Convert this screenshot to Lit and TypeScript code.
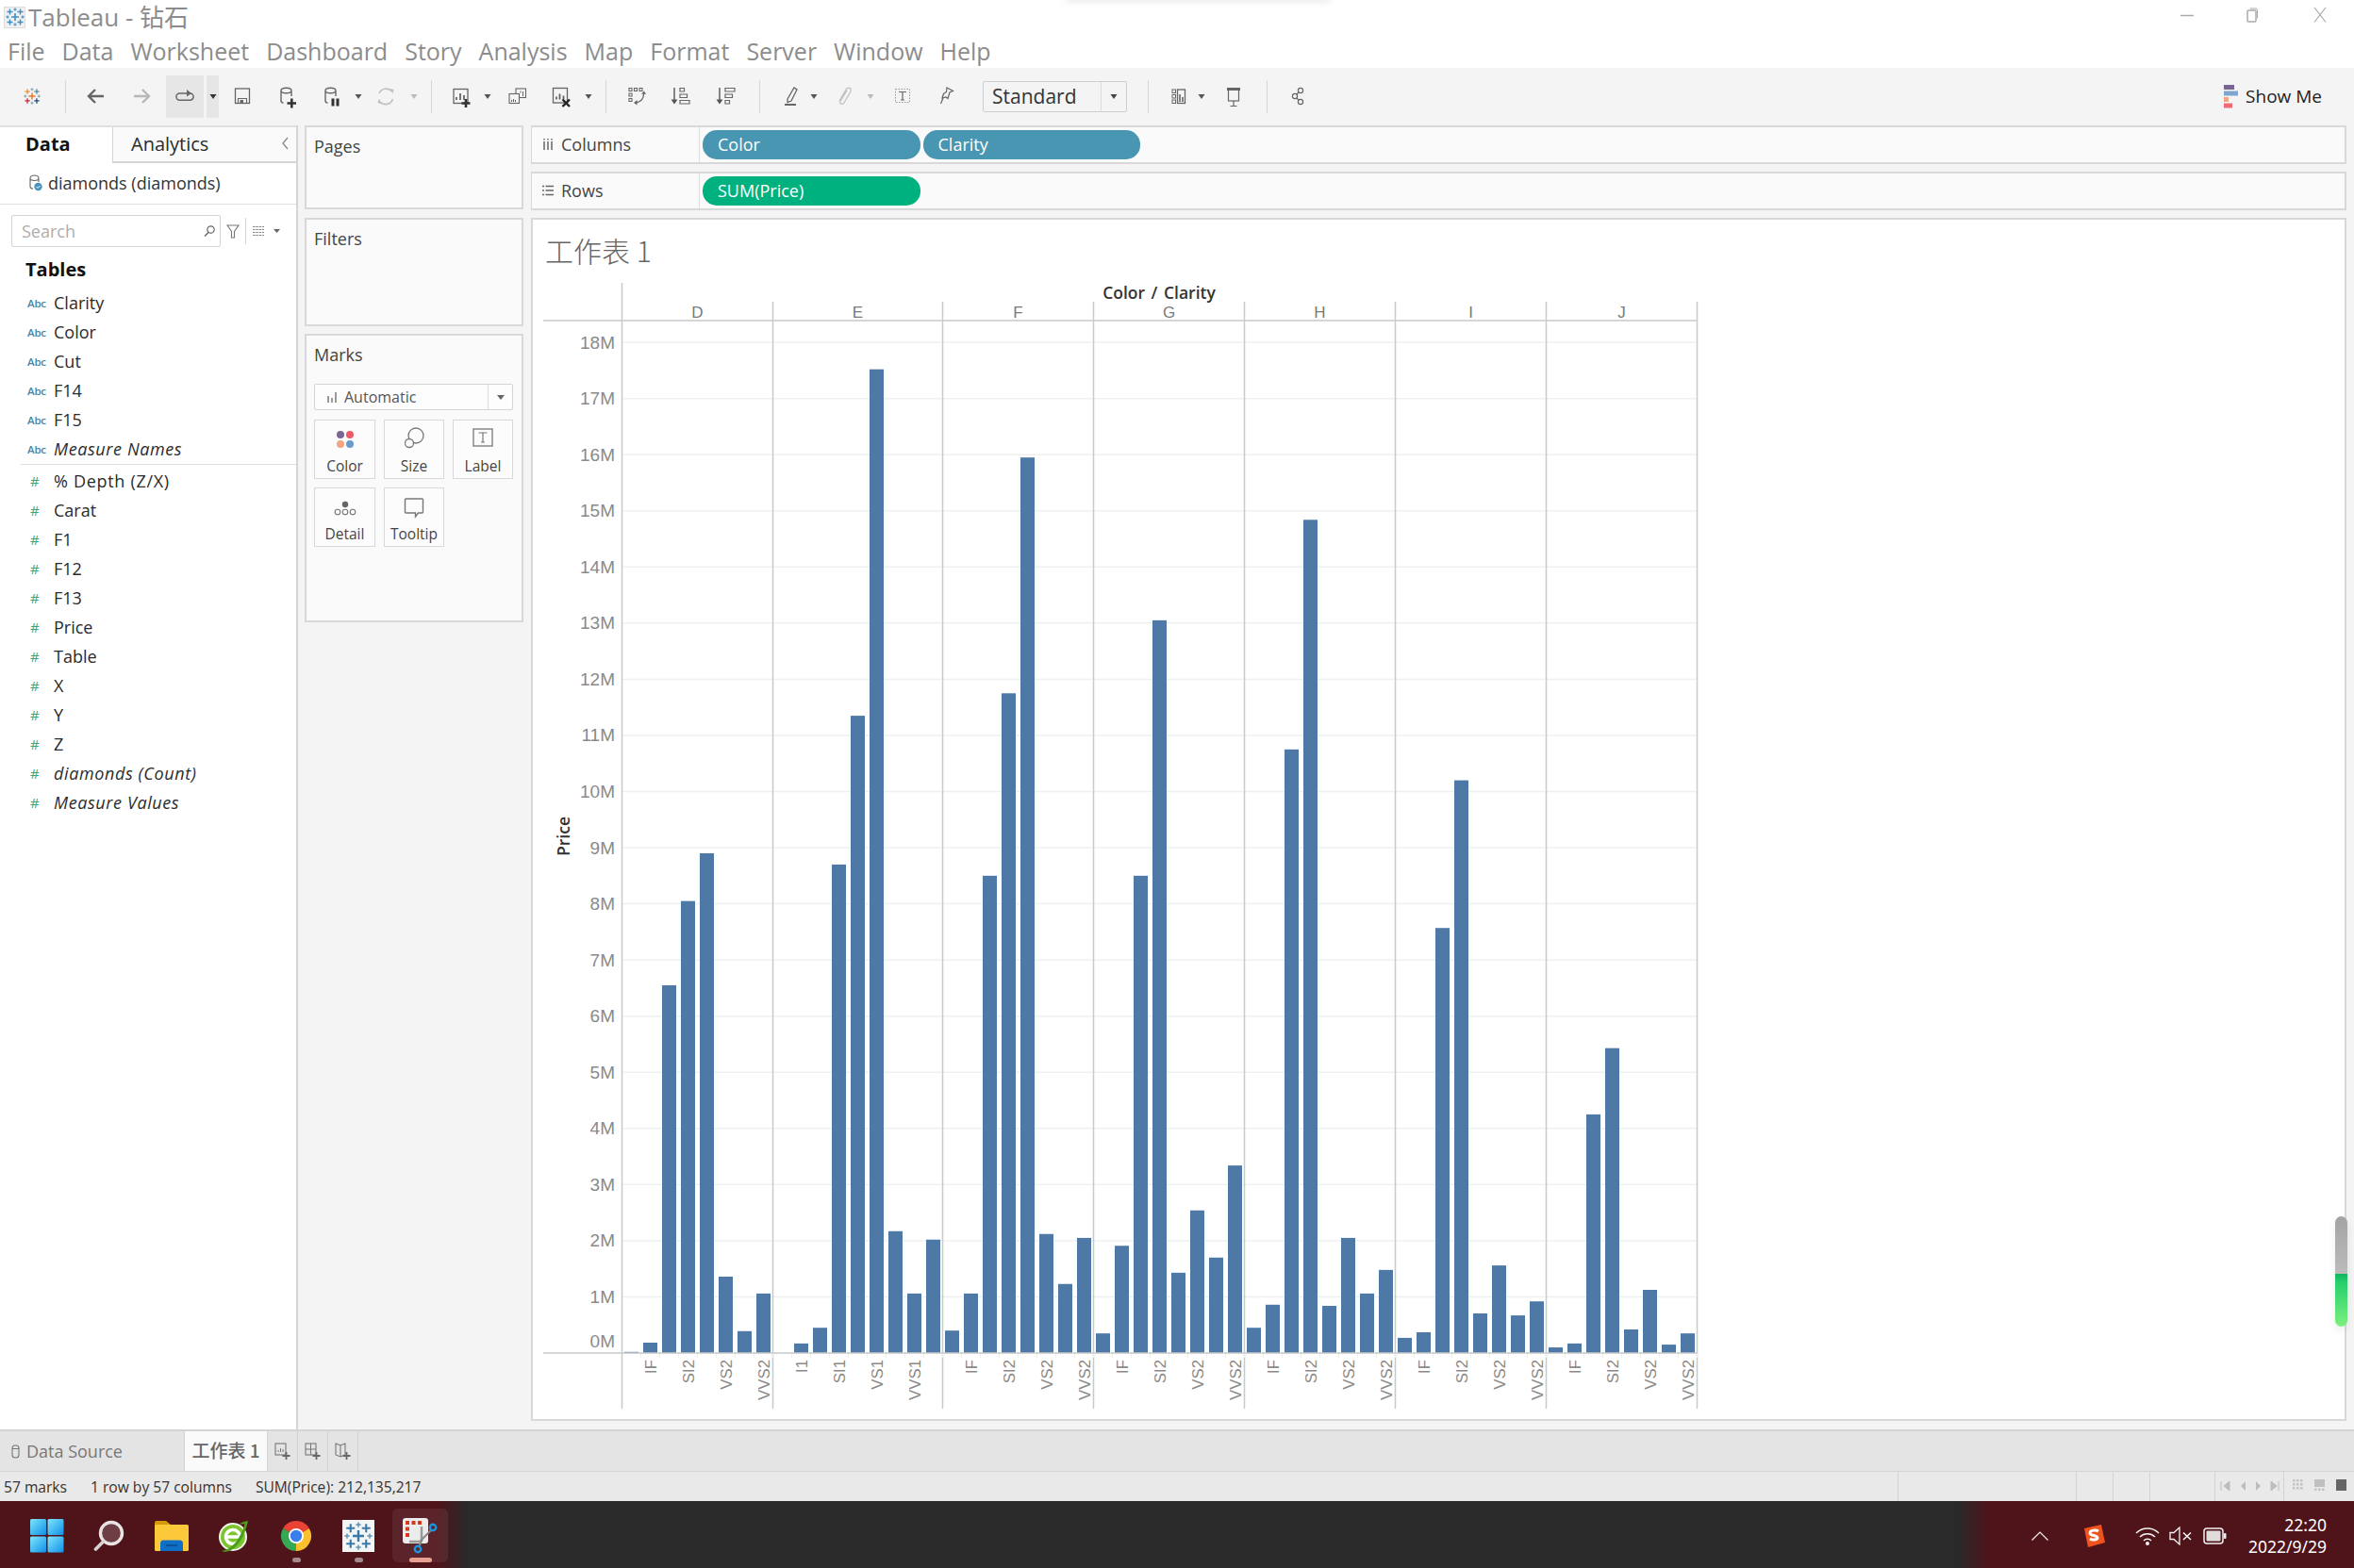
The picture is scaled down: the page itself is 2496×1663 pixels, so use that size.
import { LitElement, html, css, svg } from "lit";
import { customElement } from "lit/decorators.js";

// chart data, one list per Color pane, in millions. null is a column with no mark
const panes = [
  { name: "D", start: 659.5, bars: [0.02, 0.185, 6.55, 8.05, 8.9, 1.36, 0.39, 1.06], labels: ["IF", "SI2", "VS2", "VVS2"] },
  { name: "E", start: 819.5, bars: [null, 0.17, 0.45, 8.7, 11.35, 17.52, 2.17, 1.06, 2.02], labels: ["I1", "SI1", "VS1", "VVS1"] },
  { name: "F", start: 999.5, bars: [0.4, 1.06, 8.5, 11.75, 15.95, 2.12, 1.23, 2.05], labels: ["IF", "SI2", "VS2", "VVS2"] },
  { name: "G", start: 1159.5, bars: [0.35, 1.91, 8.5, 13.05, 1.43, 2.54, 1.7, 3.34], labels: ["IF", "SI2", "VS2", "VVS2"] },
  { name: "H", start: 1319.5, bars: [0.45, 0.86, 10.75, 14.84, 0.84, 2.05, 1.06, 1.48], labels: ["IF", "SI2", "VS2", "VVS2"] },
  { name: "I", start: 1479.5, bars: [0.27, 0.37, 7.57, 10.2, 0.705, 1.56, 0.67, 0.92], labels: ["IF", "SI2", "VS2", "VVS2"] },
  { name: "J", start: 1639.5, bars: [0.1, 0.17, 4.25, 5.43, 0.42, 1.125, 0.15, 0.35], labels: ["IF", "SI2", "VS2", "VVS2"] },
];
const BASE = 1435;
const PER_M = 59.55;
const RIGHT = 1799.5;

const dims = ["Clarity", "Color", "Cut", "F14", "F15"];
const measures = ["% Depth (Z/X)", "Carat", "F1", "F12", "F13", "Price", "Table", "X", "Y", "Z"];
const menus = ["File", "Data", "Worksheet", "Dashboard", "Story", "Analysis", "Map", "Format", "Server", "Window", "Help"];

const box = (w: number, h: number, body: unknown) =>
  html`<svg width=${w} height=${h} viewBox="0 0 ${w} ${h}">${body}</svg>`;

const tableauLogo = (size: number, c: string[]) => {
  const cross = (x: number, y: number, a: number, col: string, w: number) =>
    svg`<path d="M${x - a} ${y}H${x + a}M${x} ${y - a}V${y + a}" stroke=${col} stroke-width=${w} fill="none"/>`;
  return html`<svg width=${size} height=${size} viewBox="0 0 40 40">
    ${cross(20, 20, 8, c[0], 3.2)}
    ${cross(9, 9, 6, c[1], 2.8)}${cross(31, 9, 6, c[2], 2.8)}
    ${cross(9, 31, 6, c[3], 2.8)}${cross(31, 31, 6, c[4], 2.8)}
    ${cross(20, 4, 3.5, c[5], 2)}${cross(20, 36, 3.5, c[5], 2)}
    ${cross(4, 20, 3.5, c[5], 2)}${cross(36, 20, 3.5, c[5], 2)}
  </svg>`;
};

const caret = (col = "#555") => box(10, 30, svg`<path d="M1.5 13h7L5 18z" fill=${col}/>`);
const cyl = svg`<path d="M8 9c0-1.8 2.6-2.8 5.5-2.8S19 7.2 19 9v6M8 9c0 1.7 2.6 2.7 5.5 2.7S19 10.700 19 9M8 9v11c0 1.3 1 2 2.5 2.2" fill="none" stroke="#666" stroke-width="1.4"/>`;
const t = (body: unknown) => box(30, 30, body);

type Tool = { x: number; w: number; icon: unknown; hover?: boolean };

// toolbar items: centre x on the page, width, drawing
const tools: Tool[] = [
  { x: 34, w: 30, icon: tableauLogo(18, ["#e8762c", "#f28e2b", "#5b879b", "#c72037", "#1f447e", "#7099a6"]) },
  { x: 69.5, w: 2, icon: html`<i class="sep"></i>` },
  { x: 102, w: 30, icon: t(svg`<path d="M7 15H23M14 8l-7 7 7 7" fill="none" stroke="#666" stroke-width="2.4"/>`) },
  { x: 150, w: 30, icon: t(svg`<path d="M7 15H23M16 8l7 7-7 7" fill="none" stroke="#b8b8b8" stroke-width="2.4"/>`) },
  { x: 196, w: 40, hover: true, icon: t(svg`<path d="M17 12H9.5a3.6 3.6 0 0 0 0 7.2h11a3.6 3.6 0 0 0 0-7.2H20" fill="none" stroke="#666" stroke-width="1.5"/><path d="M17 8l5 4-5 3.5z" fill="#666"/>`) },
  { x: 225.5, w: 13, hover: true, icon: caret("#333") },
  { x: 257, w: 30, icon: t(svg`<rect x="7.5" y="7" width="15" height="15.5" fill="none" stroke="#666" stroke-width="1.3"/><path d="M10.5 22.5V17.5h9v5" fill="none" stroke="#666" stroke-width="1.1"/><rect x="12.5" y="19" width="3.5" height="3.5" fill="#666"/>`) },
  { x: 305, w: 30, icon: t(svg`${cyl}<path d="M14.5 22.5H24M19.3 17.5v10" stroke="#333" stroke-width="2.6" fill="none"/>`) },
  { x: 352, w: 30, icon: t(svg`${cyl}<rect x="14.5" y="17.5" width="3" height="8" fill="#333"/><rect x="19.5" y="17.5" width="3" height="8" fill="#333"/>`) },
  { x: 380, w: 10, icon: caret() },
  { x: 409, w: 30, icon: t(svg`<path d="M8 12a8 8 0 0 1 13-2.5M22.5 18a8 8 0 0 1-13.5 3" fill="none" stroke="#c0c0c0" stroke-width="1.6"/><path d="M19 7l4.5 1-1 4.500zM11 23.5 6.5 22l1.5-4.5z" fill="#c0c0c0"/>`) },
  { x: 439, w: 10, icon: caret("#bbb") },
  { x: 457.5, w: 2, icon: html`<i class="sep"></i>` },
  { x: 489, w: 30, icon: t(svg`<rect x="7" y="7.5" width="15" height="15" fill="none" stroke="#666" stroke-width="1.3"/><path d="M10 19v-3M14 19v-7M18 19v-5" stroke="#666" stroke-width="1.8"/><path d="M15.5 22.5h9M20 18v9" stroke="#333" stroke-width="2.6"/>`) },
  { x: 517, w: 10, icon: caret() },
  { x: 548, w: 30, icon: t(svg`<rect x="14" y="7" width="10.5" height="9.5" fill="#f4f4f4" stroke="#666" stroke-width="1.1"/><rect x="7" y="12.5" width="10.5" height="10" fill="#f4f4f4" stroke="#666" stroke-width="1.1"/><path d="M9.5 21v-2M11.5 21v-3M13.5 21v-2M19 11.5v-2M21.5 15v-5" stroke="#666" stroke-width="1"/>`) },
  { x: 595, w: 30, icon: t(svg`<rect x="6.5" y="6.5" width="15" height="15.5" fill="none" stroke="#666" stroke-width="1.3"/><path d="M10 18.5v-3M13.5 18.5v-6M17.5 18.5v-4" stroke="#666" stroke-width="1.8"/><path d="M16.5 18.5l7.5 7.5M24 18.5l-7.5 7.5" stroke="#222" stroke-width="2.4"/>`) },
  { x: 624, w: 10, icon: caret() },
  { x: 642.5, w: 2, icon: html`<i class="sep"></i>` },
  { x: 675, w: 30, icon: t(svg`<path d="M7 6.5h3v3H7zM12.5 6.5h3v3h-3zM18 6.5h3v3h-3zM7 12h3v3H7zM7 17.5h3v3H7z" fill="none" stroke="#666" stroke-width="1.1"/><path d="M22.5 12.5c0 5-3 8.500-8 9.5" fill="none" stroke="#666" stroke-width="1.3"/><path d="M20 12.5l3-3 2 3.5zM15.5 19v5.5l-3.5-2.5z" fill="#666"/>`) },
  { x: 722, w: 30, icon: t(svg`<path d="M8 6v14" stroke="#555" stroke-width="1.4"/><path d="M4.5 18.5h7L8 23.5z" fill="#555"/><path d="M14 6.5h4.5v3.5H14zM14 13h7.5v3.5H14zM14 19.5h10v3.5H14z" fill="none" stroke="#666" stroke-width="1.2"/>`) },
  { x: 770, w: 30, icon: t(svg`<path d="M8 6v14" stroke="#555" stroke-width="1.4"/><path d="M4.5 18.5h7L8 23.5z" fill="#555"/><path d="M14 6.5h10v3.5H14zM14 13h7.5v3.5H14zM14 19.5h4.5v3.5H14z" fill="none" stroke="#666" stroke-width="1.2"/>`) },
  { x: 805, w: 2, icon: html`<i class="sep"></i>` },
  { x: 838, w: 30, icon: t(svg`<path d="M12 18l7-12 3 2-6 12-4 1.5z" fill="none" stroke="#666" stroke-width="1.3"/><rect x="9" y="23" width="12" height="2" fill="#666"/>`) },
  { x: 863, w: 10, icon: caret() },
  { x: 895, w: 30, icon: t(svg`<path d="M18 9l-7 11c-1.5 3 2.5 4.5 4 2l7-12c1.5-4-3-5-5-2l-7 12" fill="none" stroke="#c4c4c4" stroke-width="1.4"/>`) },
  { x: 923, w: 10, icon: caret("#bbb") },
  { x: 957, w: 30, icon: t(svg`<rect x="7.5" y="7.5" width="15" height="14" fill="none" stroke="#999" stroke-dasharray="1.5 1.5"/><path d="M11 10.5h8M15 10.5v8.500M13 19h4" fill="none" stroke="#666" stroke-width="1.2"/>`) },
  { x: 1003, w: 30, icon: t(svg`<path d="M16 6l6.5 3.5-3.5 1.5-2 6.500-2-1.5-4 1 1.5-4.5 3-2z" fill="none" stroke="#666" stroke-width="1.2"/><path d="M12 17l-2.5 6" stroke="#666" stroke-width="1.2"/>`) },
];

const tools2: Tool[] = [
  { x: 1217, w: 2, icon: html`<i class="sep"></i>` },
  { x: 1250, w: 30, icon: t(svg`<rect x="8" y="8" width="3.5" height="3.5" fill="none" stroke="#666"/><rect x="8" y="13.5" width="3.5" height="3.5" fill="none" stroke="#666"/><rect x="8" y="19" width="3.5" height="3.5" fill="none" stroke="#666"/><rect x="13.5" y="8" width="8" height="14.5" fill="none" stroke="#666" stroke-width="1.3"/><path d="M16 21v-8M19 21v-5" stroke="#666" stroke-width="1.6"/>`) },
  { x: 1274, w: 10, icon: caret() },
  { x: 1308, w: 30, icon: t(svg`<path d="M8 7.5h14" stroke="#666" stroke-width="3"/><rect x="9.5" y="8" width="11" height="12" fill="none" stroke="#666" stroke-width="1.2"/><path d="M15 20v5M11.5 25.500h7" stroke="#666" stroke-width="1.2"/>`) },
  { x: 1343, w: 2, icon: html`<i class="sep"></i>` },
  { x: 1376, w: 30, icon: t(svg`<circle cx="18" cy="9" r="2.6" fill="none" stroke="#666" stroke-width="1.2"/><circle cx="12" cy="15" r="2.6" fill="none" stroke="#666" stroke-width="1.2"/><circle cx="18" cy="21" r="2.6" fill="none" stroke="#666" stroke-width="1.2"/><path d="M16 11l-2.5 2.2M13.8 17l2.3 2.200" stroke="#666" stroke-width="1.2"/>`) },
];

@customElement("app-root")
export class AppRoot extends LitElement {
  static styles = css`
    :host {
      display: flex;
      flex-direction: column;
      position: relative;
      width: 2496px;
      height: 1663px;
      overflow: hidden;
      background: #fff;
      color: #2b2b2b;
      font-family: "Open Sans", "Noto Sans CJK SC", sans-serif;
      font-size: 18px;
    }
    svg { display: block; flex: none; }

    /* window chrome */
    .titlebar { height: 36px; flex: none; display: flex; align-items: center; color: #8c8c8c; font-size: 26px; padding-left: 4px; box-sizing: border-box; }
    .win-logo { margin-right: 3px; width: 23px; height: 23px; display: flex; align-items: center; justify-content: center; background: #f1f1f1; border: 1px solid #ddd; box-sizing: border-box; }
    .win-title { line-height: 32px; }
    .win-btns { margin-left: auto; display: flex; align-items: center; margin-right: 29px; gap: 56px; margin-bottom: 4px; }
    .win-btns svg:last-child { margin-left: 3px; }
    .menubar { height: 36px; flex: none; display: flex; align-items: center; gap: 18px; padding-left: 8px; font-size: 25px; color: #8c8c8c; }
    .menubar span { white-space: nowrap; }

    .toolbar { height: 61px; flex: none; display: flex; align-items: center; background: #f4f4f4; box-sizing: border-box; padding-bottom: 1px; }
    .tool { height: 45px; flex: none; display: flex; align-items: center; justify-content: center; }
    .tool.hover { background: #e6e6e6; }
    .sep { display: block; width: 1px; height: 35px; background: #d6d6d6; }
    .combo { flex: none; display: flex; align-items: center; width: 153px; height: 33px; box-sizing: border-box; border: 1px solid #cfcfcf; border-radius: 2px; font-size: 21px; color: #333; padding-left: 9px; }
    .combo b { font-weight: 400; flex: 1; }
    .combo i { width: 26px; align-self: stretch; border-left: 1px solid #dcdcdc; display: flex; align-items: center; justify-content: center; }
    .showme { margin-left: auto; margin-right: 34px; display: flex; align-items: center; gap: 6px; font-size: 19px; color: #222; }

    /* body */
    .main { flex: 1; display: flex; background: #f4f4f4; min-height: 0; }
    .data { width: 316px; flex: none; box-sizing: border-box; background: #fff; border-right: 2px solid #d4d4d4; }
    .tabs { height: 40px; display: flex; box-sizing: border-box; border-top: 2px solid #e0e0e0; }
    .tab-on { width: 119px; font-size: 20px; font-weight: 700; color: #111; padding-left: 27px; box-sizing: border-box; line-height: 35px; }
    .tab-off { flex: 1; display: flex; align-items: center; justify-content: space-between; background: #fafafa; border-left: 1.5px solid #d4d4d4; border-bottom: 2px solid #d4d4d4; padding: 0 6px 2px 19px; font-size: 20px; }
    .source { height: 44px; display: flex; align-items: center; gap: 6px; padding-left: 31px; padding-bottom: 1px; border-bottom: 1.5px solid #e0e0e0; box-sizing: border-box; color: #333; }
    .search-row { display: flex; align-items: center; height: 34px; margin: 11px 0 0 12px; }
    .search { width: 222px; height: 34px; box-sizing: border-box; border: 1.5px solid #d4d4d4; border-radius: 2px; display: flex; align-items: center; justify-content: space-between; padding: 0 4px 1px 10px; color: #adadad; }
    .funnel { margin-left: 6px; }
    .filter-sep { width: 1px; height: 28px; background: #d6d6d6; margin: 0 6px; }
    .tables { font-size: 20px; font-weight: 700; color: #111; padding-left: 27px; height: 43.5px; line-height: 48px; }
    .field { height: 31px; display: flex; align-items: center; padding-left: 29px; white-space: nowrap; }
    .field .ty { width: 28px; flex: none; }
    .abc { font-size: 11.5px; font-weight: 600; color: #4a86a3; letter-spacing: -0.2px; }
    .num { font-size: 15px; color: #3fa27c; padding-left: 3px; box-sizing: border-box; }
    .field.it .name { font-style: italic; letter-spacing: 0.6px; }
    .field.wide .name { letter-spacing: 0.7px; }
    .rule { height: 1.5px; background: #e0e0e0; margin: 0 0 1px 22px; }

    .cards { width: 232px; flex: none; margin-left: 7px; }
    .card { box-sizing: border-box; background: #fafafa; border: 2px solid #d8d8d8; padding: 8px 0 0 8px; color: #444; }
    .card.pages { height: 89px; margin-bottom: 9px; }
    .card.filters { height: 115px; margin-bottom: 8px; }
    .card.marks { height: 306px; }
    .mark-type { width: 211px; height: 28px; margin: 19px 0 10px 0; box-sizing: border-box; border: 1.5px solid #d4d4d4; border-radius: 2px; display: flex; align-items: center; font-size: 16px; background: #fdfdfd; color: #555; padding-left: 13px; gap: 7px; }
    .mark-type span { flex: 1; }
    .mark-type i { width: 25px; align-self: stretch; border-left: 1px solid #dcdcdc; display: flex; justify-content: center; align-items: center; }
    .mark-btns { display: grid; grid-template-columns: 65px 64px 64px; column-gap: 9px; row-gap: 9px; }
    .mark-btn { height: 63px; box-sizing: border-box; border: 1.5px solid #d8d8d8; display: flex; flex-direction: column; align-items: center; font-size: 15.5px; color: #444; background: #fcfcfc; }
    .mark-btn .ico { height: 37px; flex: none; }

    .work { flex: 1; display: flex; flex-direction: column; margin: 0 8px 9px 8px; min-width: 0; }
    .shelf { height: 41px; flex: none; box-sizing: border-box; background: #fafafa; border: 2px solid #d8d8d8; border-left-width: 1.5px; display: flex; align-items: center; margin-bottom: 8px; }
    .shelf-label { width: 178px; align-self: stretch; box-sizing: border-box; flex: none; display: flex; align-items: center; gap: 7px; padding: 0 0 2px 11px; border-right: 1px solid #dedede; color: #444; }
    .pill { width: 230.5px; height: 31px; border-radius: 15px; color: #fff; margin-left: 3px; padding-left: 16px; box-sizing: border-box; line-height: 30px; font-weight: 500; }
    .pill.dim { background: #4996b2; }
    .pill.mea { background: #00b180; }

    .sheet { flex: 1; background: #fff; border: 2px solid #d8d8d8; box-sizing: border-box; min-height: 0; }
    .sheet-title { height: 65px; box-sizing: border-box; padding: 10px 0 0 13px; font-size: 30px; font-family: "Noto Sans CJK SC", sans-serif; font-weight: 300; color: #666; line-height: 44px; }
    .chart text { font-family: "Liberation Sans", sans-serif; fill: #8a8a8a; }
    .chart .hdr { font-size: 17px; fill: #7a7a7a; }
    .chart .ttl { font-family: "Open Sans", sans-serif; font-size: 17.5px; font-weight: 600; fill: #333; word-spacing: 2px; }

    /* bottom strips */
    .sheet-tabs { height: 45px; flex: none; display: flex; background: #e4e4e4; border-top: 2px solid #d4d4d4; box-sizing: border-box; border-bottom: 1.5px solid #d4d4d4; }
    .ds { width: 195px; flex: none; display: flex; align-items: center; gap: 7px; padding-left: 12px; box-sizing: border-box; font-size: 18px; color: #777; }
    .active-tab { width: 89px; flex: none; background: #fafafa; text-align: center; line-height: 40px; font-size: 19px; font-family: "Noto Sans CJK SC", sans-serif; color: #666; font-weight: 500; border-left: 1px solid #d4d4d4; border-right: 1px solid #d4d4d4; box-sizing: border-box; }
    .new-tab { width: 32px; flex: none; display: flex; align-items: center; justify-content: center; border-right: 1.5px solid #d0d0d0; box-sizing: border-box; }
    .status { height: 31px; flex: none; display: flex; align-items: center; background: #e9e9e9; font-size: 15.6px; color: #333; box-sizing: border-box; }
    .status .msg { white-space: nowrap; margin-left: 25px; }
    .status .msg:first-child { margin-left: 4px; }
    .cell { align-self: stretch; border-left: 1.5px solid #d4d4d4; box-sizing: border-box; flex: none; display: flex; align-items: center; }
    .cell.first { margin-left: auto; }

    .taskbar { height: 71px; flex: none; display: flex; align-items: stretch; background: linear-gradient(to right, #4e141a 465px, #2a2a2a 495px, #2a2a2a 2075px, #4e141a 2110px); color: #fff; }
    .apps { display: grid; grid-template-columns: repeat(7, 66px); padding-left: 16.5px; }
    .app { position: relative; display: flex; align-items: center; justify-content: center; padding-top: 3px; }
    .app.on::before { content: ""; position: absolute; left: 3px; right: 4px; top: 8px; bottom: 6px; background: rgba(255, 255, 255, 0.07); border-radius: 6px; }
    .app svg { position: relative; }
    .tile { background: #f3f4f4; width: 34px; height: 34px; display: flex; align-items: center; justify-content: center; }
    .dot { position: absolute; left: 50%; top: 60px; width: 9px; height: 5px; margin-left: -4px; border-radius: 3px; background: #a58a8d; }
    .on .dot { width: 24px; margin-left: -12px; background: #e8a090; }
    .tray { margin-left: auto; display: flex; align-items: center; padding-top: 2px; }
    .tray .g1 { margin-left: 34px; }
    .tray .g2 { margin-left: 31px; }
    .tray .g3 { margin-left: 10px; }
    .tray .g4 { margin-left: 11px; }
    .clock { width: 106px; margin-right: 29px; text-align: right; font-size: 17.5px; line-height: 23px; font-family: "Noto Sans", sans-serif; }

    .scroll { position: absolute; left: 2476px; top: 1290px; width: 13px; height: 117px; border-radius: 7px; background: linear-gradient(to bottom, #a3a3a3 0, #bcbcbc 52%, #12b35e 52%, #27d06c 60%, #7cf07f 100%); box-shadow: 0 4px 10px rgba(0, 0, 0, 0.08); }
    .smudge { position: absolute; left: 1130px; top: -6px; width: 280px; height: 6px; box-shadow: 0 1px 8px rgba(0, 0, 0, 0.12); }
  `;

  private renderTools(items: Tool[], from: number) {
    let right = from;
    return items.map((i) => {
      const left = i.x - i.w / 2;
      const gap = left - right;
      right = left + i.w;
      return html`<div class="tool ${i.hover ? "hover" : ""}" style="width:${i.w}px;margin-left:${gap}px">${i.icon}</div>`;
    });
  }

  private renderChart() {
    const ticks = Array.from({ length: 19 }, (_, n) => n);
    return html`<svg class="chart" width="1300" height="1210" viewBox="565 298 1300 1210">
      ${ticks.filter((n) => n > 0).map((n) => svg`<line x1="659" x2=${RIGHT} y1=${BASE - n * PER_M} y2=${BASE - n * PER_M} stroke="#f0f0f0" stroke-width="1.5"/>`)}
      ${ticks.map((n) => svg`<text x="652" y=${n === 0 ? 1429 : BASE - n * PER_M + 6.5} text-anchor="end" font-size="19">${n}M</text>`)}
      <text class="ttl" x="1229" y="316.5" text-anchor="middle">Color / Clarity</text>
      <text class="ttl" x="0" y="0" text-anchor="middle" transform="translate(603.5 887) rotate(-90)">Price</text>
      <line x1="659.5" x2="659.5" y1="300" y2="1494" stroke="#c9c9c9" stroke-width="1.5"/>
      ${panes.map((p, i) => {
        const next = i + 1 < panes.length ? panes[i + 1].start : RIGHT;
        return svg`
          <line x1=${next} x2=${next} y1="320" y2="1494" stroke="#c9c9c9" stroke-width="1.5"/>
          <text class="hdr" x=${(p.start + next) / 2} y="337" text-anchor="middle">${p.name}</text>
          ${p.bars.map((v, c) => {
            const x = p.start + c * 20;
            return svg`
              <line x1=${x + 20} x2=${x + 20} y1=${BASE} y2=${BASE + 5} stroke="#eeeeee"/>
              ${v === null ? "" : svg`<rect x=${x + 2.5} y=${BASE - v * PER_M} width="15" height=${v * PER_M} fill="#4e79a7"/>`}`;
          })}
          ${p.labels.map((l, k) => {
            const cx = p.start + 20 * (2 * k + 1) + 10.5;
            return svg`<text x=${cx} y="1442" dy=".35em" font-size="16.8" text-anchor="end" transform="rotate(-90 ${cx} 1442)">${l}</text>`;
          })}`;
      })}
      <line x1="576" x2=${RIGHT} y1="340" y2="340" stroke="#c9c9c9" stroke-width="1.5"/>
      <line x1="576" x2=${RIGHT} y1=${BASE} y2=${BASE} stroke="#c9c9c9" stroke-width="1.5"/>
    </svg>`;
  }

  private renderApps() {
    const grad = svg`<defs>
      <linearGradient id="w" x1="0" y1="0" x2="1" y2="1"><stop offset="0" stop-color="#7fe6fb"/><stop offset="1" stop-color="#0f8fe8"/></linearGradient>
    </defs>`;
    return html`<div class="apps">
      <div class="app">${box(36, 36, svg`${grad}<rect x="0" y="0" width="17" height="17" rx="1.5" fill="url(#w)"/><rect x="18.5" y="0" width="17" height="17" rx="1.5" fill="url(#w)"/><rect x="0" y="18.5" width="17" height="17" rx="1.5" fill="url(#w)"/><rect x="18.5" y="18.5" width="17" height="17" rx="1.5" fill="url(#w)"/>`)}</div>
      <div class="app">${box(34, 34, svg`<circle cx="19" cy="14" r="11.5" fill="#6f3d44" stroke="#e8e4e4" stroke-width="3.4"/><path d="M10.5 23 2.500 31" stroke="#d9d4d4" stroke-width="3.6" stroke-linecap="round"/>`)}</div>
      <div class="app">${box(36, 34, svg`<path d="M0 3a2 2 0 0 1 2-2h10l5 4v8H0z" fill="#d69a08"/><rect x="0" y="5" width="36" height="28" rx="1.5" fill="#fcc93a"/><path d="M6 33V25a3.5 3.5 0 0 1 3.5-3.5h17A3.5 3.5 0 0 1 30 25v8z" fill="#0f6fc6"/><path d="M12 27h12" stroke="#0a4a8a" stroke-width="1.500"/>`)}</div>
      <div class="app">${box(34, 36, svg`<circle cx="16" cy="19" r="15" fill="#f2f7ee"/><circle cx="16" cy="19" r="13" fill="#7cc52e"/><path d="M8.5 19h15M23.500 19a7.500 7.500 0 1 0-2.500 5.500" fill="none" stroke="#fff" stroke-width="3.500"/><path d="M4 34C12 37 26 30 32 2c-4 .5-8 2-11 4.500 4-1.500 6-1.500 7.500-1C23 24 13 33 4 34z" fill="#4a9e1c"/>`)}</div>
      <div class="app">${box(34, 34, svg`<path d="M17 17 3.14 9A16 16 0 0 1 30.86 9Z" fill="#ea4335"/><path d="M17 17 30.86 9A16 16 0 0 1 17 33Z" fill="#fbc02d"/><path d="M17 17 17 33A16 16 0 0 1 3.14 9Z" fill="#34a853"/><circle cx="17" cy="17" r="8" fill="#fff"/><circle cx="17" cy="17" r="6.2" fill="#3c7ded"/>`)}<i class="dot"></i></div>
      <div class="app"><div class="tile">${tableauLogo(30, ["#3a7aa8", "#3a7aa8", "#3a7aa8", "#3a7aa8", "#3a7aa8", "#5c93b8"])}</div><i class="dot"></i></div>
      <div class="app on">${box(37, 38, svg`<rect x="0" y="0" width="27" height="27" rx="3" fill="#ececec"/><path d="M3 3h4v4H3zM9.5 3h4v4h-4zM16 3h4v4h-4zM3 9.5h4v4H3zM3 16h4v4H3z" fill="#d8381c"/><path d="M20 9v13a3 3 0 0 1-3 3H7" fill="none" stroke="#9a9a9a" stroke-width="2.5"/><path d="M21 22 31 12M21 22 17 31" stroke="#888" stroke-width="2"/><circle cx="32" cy="10" r="3.2" fill="none" stroke="#1a96e0" stroke-width="2.4"/><circle cx="16" cy="33" r="3.2" fill="none" stroke="#1a96e0" stroke-width="2.4"/>`)}<i class="dot"></i></div>
    </div>`;
  }

  private renderStatus() {
    const navCol = "#bdbdbd";
    const dots = (x: number, y: number, n: number, s: number, f: string) =>
      Array.from({ length: n * n }, (_, i) =>
        svg`<rect x=${x + (i % n) * (s + 1.5)} y=${y + Math.floor(i / n) * (s + 1.5)} width=${s} height=${s} fill=${f}/>`);
    return html`<div class="status">
      <span class="msg">57 marks</span>
      <span class="msg">1 row by 57 columns</span>
      <span class="msg">SUM(Price): 212,135,217</span>
      <div class="cell first" style="width:189px"></div>
      <div class="cell" style="width:39px"></div>
      <div class="cell" style="width:39px"></div>
      <div class="cell" style="width:69px"></div>
      <div class="cell" style="width:73px">${box(73, 31, svg`
        <path d="M6 10v10M15 10l-6 5 6 5z" fill=${navCol} stroke=${navCol}/>
        <path d="M32 10l-5 5 5 5zM43 10l5 5-5 5z" fill=${navCol}/>
        <path d="M59 10l6 5-6 5zM67 10v10" fill=${navCol} stroke=${navCol}/>`)}</div>
      <div class="cell" style="width:75px">${box(75, 31, svg`
        ${dots(9, 8, 3, 2.5, "#c4c4c4")}
        <rect x="32" y="8" width="11" height="8" fill="#c0c0c0"/>${dots(32, 17.5, 3, 2.5, "#c4c4c4").slice(0, 3)}
        <rect x="55" y="8" width="11" height="12" fill="#666"/>`)}</div>
    </div>`;
  }

  render() {
    return html`
      <div class="titlebar">
        <div class="win-logo">${tableauLogo(20, Array(6).fill("#3d8ec0"))}</div>
        <span class="win-title">Tableau - 钻石</span>
        <div class="win-btns">
          ${box(14, 16, svg`<path d="M0 8.5h14" stroke="#aaa" stroke-width="1.5"/>`)}
          ${box(12, 16, svg`<rect x="1" y="3" width="9" height="12" rx="1" fill="none" stroke="#aaa" stroke-width="1.5"/><path d="M3.5 1h6.5a1.5 1.5 0 0 1 1.5 1.5v9" fill="none" stroke="#aaa"/>`)}
          ${box(14, 16, svg`<path d="M1 0 13 15.5M13 0 1 15.5" stroke="#aaa" stroke-width="1.2"/>`)}
        </div>
      </div>
      <div class="menubar">${menus.map((m) => html`<span>${m}</span>`)}</div>

      <div class="toolbar">
        ${this.renderTools(tools, 0)}
        <div class="combo" style="margin-left:${1042 - 1018}px"><b>Standard</b><i>${caret("#444")}</i></div>
        ${this.renderTools(tools2, 1195)}
        <div class="showme">
          ${box(17, 36, svg`<rect x="0" y="6" width="11" height="5" fill="#7b6593"/><rect x="0" y="12.5" width="15" height="5" fill="#7fa6cf"/><rect x="0" y="19" width="5" height="5" fill="#f4a582"/><rect x="0" y="25.5" width="9" height="5" fill="#ee6a78"/>`)}
          <span>Show Me</span>
        </div>
      </div>

      <div class="main">
        <div class="data">
          <div class="tabs">
            <div class="tab-on">Data</div>
            <div class="tab-off"><span>Analytics</span>${box(10, 14, svg`<path d="M7 1 2 7l5 6" fill="none" stroke="#888" stroke-width="1.3"/>`)}</div>
          </div>
          <div class="source">
            ${box(14, 18, svg`<path d="M1 4c0-2 2-3 4.5-3S10 2 10 4v4M1 4c0 1.5 2 2.5 4.5 2.5S10 5.500 10 4M1 4v9c0 1.5 1.5 2 3 2.2" fill="none" stroke="#666" stroke-width="1.1"/><circle cx="9.5" cy="13" r="4.2" fill="#4a93bd"/><path d="M7.5 13l1.5 1.5 2.5-2.5" fill="none" stroke="#fff"/>`)}
            <span>diamonds (diamonds)</span>
          </div>
          <div class="search-row">
            <div class="search"><span>Search</span>${box(14, 16, svg`<circle cx="8.5" cy="6.5" r="3.7" fill="none" stroke="#666" stroke-width="1.2"/><path d="M6 9.5 2 13.5" stroke="#666" stroke-width="1.4"/>`)}</div>
            <div class="funnel">${box(14, 16, svg`<path d="M1 2h12L8.5 8.5V15h-3V8.5z" fill="none" stroke="#777" stroke-width="1.1"/>`)}</div>
            <i class="filter-sep"></i>
            ${box(30, 16, svg`<path d="M1 3.5h12M1 6.5h12M1 9.5h12M1 12.5h12" stroke="#888" stroke-dasharray="2.5 .8"/><path d="M23 6h7l-3.500 4z" fill="#666"/>`)}
          </div>
          <div class="tables">Tables</div>
          ${dims.map((d) => html`<div class="field"><span class="ty abc">Abc</span><span class="name">${d}</span></div>`)}
          <div class="field it"><span class="ty abc">Abc</span><span class="name">Measure Names</span></div>
          <div class="rule"></div>
          ${measures.map((d) => html`<div class="field ${d.startsWith("%") ? "wide" : ""}"><span class="ty num">#</span><span class="name">${d}</span></div>`)}
          <div class="field it"><span class="ty num">#</span><span class="name">diamonds (Count)</span></div>
          <div class="field it"><span class="ty num">#</span><span class="name">Measure Values</span></div>
        </div>

        <div class="cards">
          <div class="card pages">Pages</div>
          <div class="card filters">Filters</div>
          <div class="card marks">
            Marks
            <div class="mark-type">
              ${box(11, 12, svg`<path d="M1 5v7M5 7v5M9 1v11" stroke="#999" stroke-width="2"/>`)}
              <span>Automatic</span>
              <i>${box(10, 10, svg`<path d="M1 3h8L5 8z" fill="#666"/>`)}</i>
            </div>
            <div class="mark-btns">
              <div class="mark-btn">
                <div class="ico">${box(24, 36, svg`<circle cx="7" cy="15" r="4" fill="#7b6593"/><circle cx="17" cy="15" r="4" fill="#ee5a6b"/><circle cx="7" cy="25" r="4" fill="#f4a582"/><circle cx="17" cy="25" r="4" fill="#6a9bcb"/>`)}</div>Color
              </div>
              <div class="mark-btn">
                <div class="ico">${box(24, 36, svg`<circle cx="14" cy="16" r="8" fill="none" stroke="#777" stroke-width="1.3"/><circle cx="7" cy="24" r="4.5" fill="#fcfcfc" stroke="#777" stroke-width="1.3"/>`)}</div>Size
              </div>
              <div class="mark-btn">
                <div class="ico">${box(24, 36, svg`<rect x="2" y="9" width="20" height="18" fill="none" stroke="#777" stroke-width="1.3"/><path d="M7.500 13h9M12 13v10M10 23h4" fill="none" stroke="#777" stroke-width="1.2"/>`)}</div>Label
              </div>
              <div class="mark-btn">
                <div class="ico">${box(26, 36, svg`<circle cx="13" cy="17" r="3.2" fill="#666"/><circle cx="5" cy="25" r="2.8" fill="none" stroke="#777" stroke-width="1.1"/><circle cx="13" cy="25" r="2.8" fill="none" stroke="#777" stroke-width="1.1"/><circle cx="21" cy="25" r="2.8" fill="none" stroke="#777" stroke-width="1.1"/>`)}</div>Detail
              </div>
              <div class="mark-btn">
                <div class="ico">${box(24, 36, svg`<path d="M3.5 11h17a1 1 0 0 1 1 1v13a1 1 0 0 1-1 1h-4l-3 4v-4h-10a1 1 0 0 1-1-1V12a1 1 0 0 1 1-1z" fill="none" stroke="#777" stroke-width="1.4"/>`)}</div>Tooltip
              </div>
            </div>
          </div>
        </div>

        <div class="work">
          <div class="shelf">
            <div class="shelf-label">${box(13, 14, svg`<path d="M2 1v1.5M6 1v1.5M10 1v1.5M2 4v9M6 4v9M10 4v9" stroke="#666" stroke-width="1.5"/>`)}Columns</div>
            <div class="pill dim">Color</div><div class="pill dim">Clarity</div>
          </div>
          <div class="shelf">
            <div class="shelf-label">${box(13, 14, svg`<path d="M0 2.5h2M3.5 2.5H12M0 7h2M3.5 7H12M0 11.5h2M3.5 11.5H12" stroke="#666" stroke-width="1.5"/>`)}Rows</div>
            <div class="pill mea">SUM(Price)</div>
          </div>
          <div class="sheet">
            <div class="sheet-title">工作表 1</div>
            ${this.renderChart()}
          </div>
        </div>
      </div>

      <div class="sheet-tabs">
        <div class="ds">${box(9, 15, svg`<rect x="1" y="1" width="7" height="13" rx="3" fill="none" stroke="#777" stroke-width="1.1"/><path d="M1 4.5h7" stroke="#777"/>`)}Data Source</div>
        <div class="active-tab">工作表 1</div>
        <div class="new-tab">${box(18, 20, svg`<rect x="1" y="2" width="11" height="12" fill="none" stroke="#777" stroke-width="1.1"/><path d="M4 11V9M6.5 11V7M9 11V8" stroke="#777"/><path d="M8.5 15h8M12.5 11v8" stroke="#666" stroke-width="1.8"/>`)}</div>
        <div class="new-tab">${box(18, 20, svg`<rect x="1" y="2" width="11" height="12" fill="none" stroke="#777" stroke-width="1.1"/><path d="M1 8h11M6.5 2v12" stroke="#777"/><path d="M8.5 15h8M12.5 11v8" stroke="#666" stroke-width="1.8"/>`)}</div>
        <div class="new-tab">${box(18, 20, svg`<path d="M1 2l5 2 5-2v12l-5 2-5-2zM6 4v12" fill="none" stroke="#777" stroke-width="1.1"/><path d="M8.5 15h8M12.5 11v8" stroke="#666" stroke-width="1.8"/>`)}</div>
      </div>
      ${this.renderStatus()}

      <div class="taskbar">
        ${this.renderApps()}
        <div class="tray">
          ${box(20, 12, svg`<path d="M1.5 10.5 10 2l8.5 8.5" fill="none" stroke="#f2f2f2" stroke-width="1.2"/>`)}
          <div class="g1">${box(26, 26, svg`<path d="M3 5 21 1l4 19-18 5z" fill="#f0541e"/><path d="M18 8c-3-2-9-1-9 2 0 3 8 2 8 5 0 2-5 3-8 1" fill="none" stroke="#fff" stroke-width="3"/>`)}</div>
          <div class="g2">${box(26, 20, svg`<path d="M1 7a17 17 0 0 1 24 0M5 11a11.5 11.5 0 0 1 16 0M9 15a5.5 5.5 0 0 1 8 0" fill="none" stroke="#f2f2f2" stroke-width="1.5"/><circle cx="13" cy="18" r="2" fill="#f2f2f2"/>`)}</div>
          <div class="g3">${box(25, 20, svg`<path d="M1 6.5h4L11 1v18L5 13.5H1z" fill="none" stroke="#f2f2f2" stroke-width="1.3"/><path d="M15 6.5 23 14M23 6.5 15 14" stroke="#f2f2f2" stroke-width="1.6"/>`)}</div>
          <div class="g4">${box(25, 18, svg`<rect x="1" y="1" width="20" height="16" rx="3" fill="none" stroke="#f2f2f2" stroke-width="1.5"/><rect x="3.5" y="3.5" width="15" height="11" rx="1" fill="#f2f2f2" opacity=".9"/><rect x="22" y="6" width="2.5" height="6" rx="1" fill="#f2f2f2"/>`)}</div>
          <div class="clock">22:20<br />2022/9/29</div>
        </div>
      </div>

      <div class="scroll"></div>
      <div class="smudge"></div>
    `;
  }
}
